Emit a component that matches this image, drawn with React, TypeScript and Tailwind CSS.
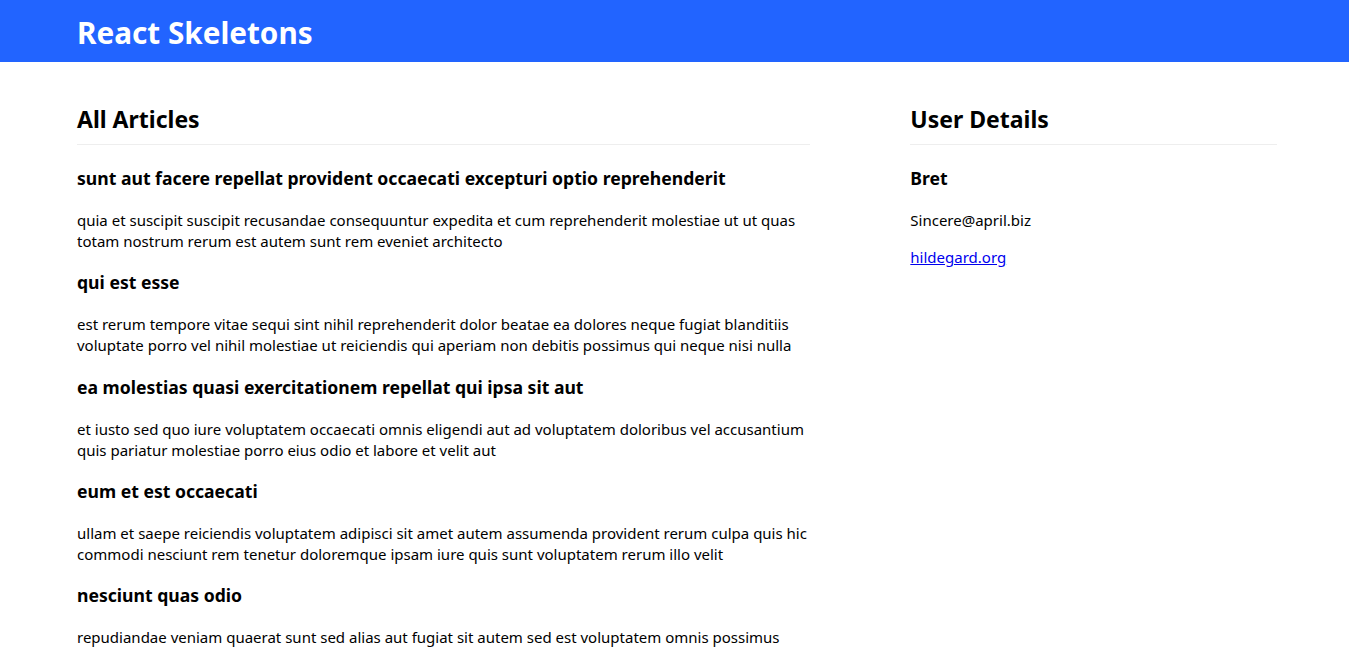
const posts = [
  {
    title: 'sunt aut facere repellat provident occaecati excepturi optio reprehenderit',
    body: 'quia et suscipit suscipit recusandae consequuntur expedita et cum reprehenderit molestiae ut ut quas totam nostrum rerum est autem sunt rem eveniet architecto',
  },
  {
    title: 'qui est esse',
    body: 'est rerum tempore vitae sequi sint nihil reprehenderit dolor beatae ea dolores neque fugiat blanditiis voluptate porro vel nihil molestiae ut reiciendis qui aperiam non debitis possimus qui neque nisi nulla',
  },
  {
    title: 'ea molestias quasi exercitationem repellat qui ipsa sit aut',
    body: 'et iusto sed quo iure voluptatem occaecati omnis eligendi aut ad voluptatem doloribus vel accusantium quis pariatur molestiae porro eius odio et labore et velit aut',
  },
  {
    title: 'eum et est occaecati',
    body: 'ullam et saepe reiciendis voluptatem adipisci sit amet autem assumenda provident rerum culpa quis hic commodi nesciunt rem tenetur doloremque ipsam iure quis sunt voluptatem rerum illo velit',
  },
  {
    title: 'nesciunt quas odio',
    body: 'repudiandae veniam quaerat sunt sed alias aut fugiat sit autem sed est voluptatem omnis possimus esse voluptatibus quis est aut tenetur dolor neque',
  },
];

function SectionTitle({ children }: { children: React.ReactNode }) {
  return (
    <h2 className="text-[23px] font-bold leading-[30px] pb-[10px] border-b border-[#eeeeee] mb-[21px]">
      {children}
    </h2>
  );
}

export default function App() {
  return (
    <div className="min-h-screen bg-white text-black" style={{ fontFamily: '"Noto Sans", sans-serif' }}>
      {/* header */}
      <header className="h-[62px] bg-[#2264ff] flex items-center pl-[77px] pr-[72px] pt-1">
        <h1 className="text-white text-[29.7px] font-bold leading-none">React Skeletons</h1>
      </header>

      <main className="pl-[77px] pr-[72px] pt-[42px] grid grid-cols-[2fr_1fr] gap-x-[100px]">
        <section>
          <SectionTitle>All Articles</SectionTitle>
          {posts.map((p) => (
            <article key={p.title}>
              <h3 className="text-[17.6px] font-bold leading-[25px] mb-[19px]">{p.title}</h3>
              <p className="text-[15px] leading-[21px] mb-[18.3px]">{p.body}</p>
            </article>
          ))}
        </section>

        <aside>
          <SectionTitle>User Details</SectionTitle>
          <h3 className="text-[17.6px] font-bold leading-[25px] mb-[19px]">Bret</h3>
          <p className="text-[15px] leading-[21px] mb-4">Sincere@april.biz</p>
          <p className="text-[15px] leading-[21px]">
            <a href="#" className="text-[#0000ee] underline">hildegard.org</a>
          </p>
        </aside>
      </main>
    </div>
  );
}
